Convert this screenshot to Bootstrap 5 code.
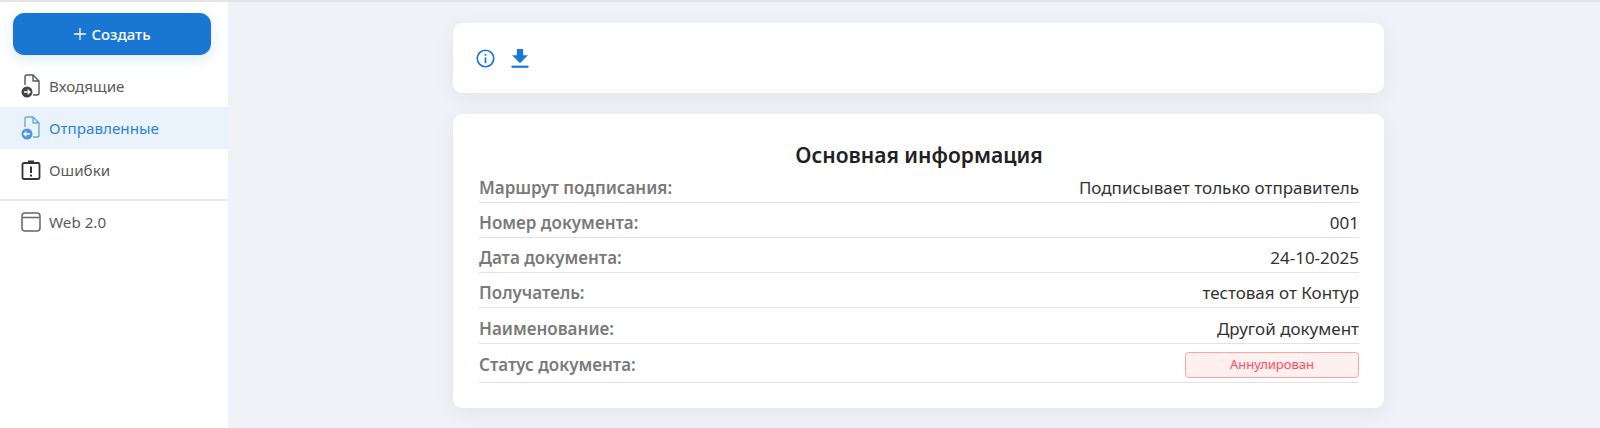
<!DOCTYPE html>
<html lang="ru">

<head>
    <meta charset="UTF-8">
    <meta name="viewport" content="width=device-width, initial-scale=1.0">
    <title>Документ</title>
    <link href="https://cdn.jsdelivr.net/npm/bootstrap@5.3.0/dist/css/bootstrap.min.css" rel="stylesheet">
    <style>
        body {
            font-family: "Noto Sans", sans-serif;
            background-color: #f1f2f7;
            height: 428px;
            overflow: hidden;
            border-top: 2px solid #e4e4e6;
        }

        .side-panel {
            width: 228px;
            height: 426px;
            background-color: #fff;
            padding-top: 11px;
        }

        .create-btn {
            display: block;
            width: 198px;
            height: 42px;
            margin: 0 0 10px 13px;
            font-size: 15px;
            font-weight: 500;
            background-color: #1976d2;
            border-color: #1976d2;
            border-radius: 11px;
            box-shadow: 0 4px 14px rgba(25, 118, 210, .16);
        }

        .side-item {
            height: 42px;
            padding-left: 21px;
            gap: 8px;
            font-size: 15.2px;
            color: #5b5b5b;
        }

        .side-item span {
            padding-top: 1px;
        }

        .side-item.is-active {
            background-color: #eaf2fb;
            color: #2d83d8;
        }

        .side-line {
            margin: 8px 0 0;
            border-top: 2px solid #e9e9e9;
            opacity: 1;
        }

        .main-area {
            width: 931px;
            margin-left: 225px;
            padding-top: 21px;
        }

        .info-panel {
            border: 0;
            border-radius: 9px;
            box-shadow: 0 6px 20px rgba(60, 64, 90, .07);
        }

        .tool-panel {
            height: 70px;
            padding-left: 23px;
            gap: 16px;
            margin-bottom: 21px;
        }

        .data-panel {
            height: 294px;
            padding: 25px 25px 0 26px;
        }

        .panel-title {
            font-size: 21px;
            font-weight: 600;
            line-height: 32px;
            color: #212121;
            margin: 0;
        }

        .data-row {
            height: 35px;
            padding-top: 5px;
            border-bottom: 1px solid #e2e2e2;
            font-size: 17px;
            color: #333;
        }

        .data-row:first-of-type {
            height: 32px;
            padding-top: 3px;
        }

        .data-row:nth-of-type(5) {
            height: 36px;
            padding-top: 6px;
        }

        .data-row:last-of-type {
            height: 39px;
            padding-top: 3px;
        }

        .data-label {
            font-weight: 600;
            color: #7a7a7a;
        }

        .status-tag {
            width: 174px;
            height: 26px;
            border: 1px solid #ffa3a3;
            border-radius: 4px;
            background-color: #fff0f0;
            color: #ff4d5e;
            font-size: 13px;
        }
    </style>
</head>

<body>
    <div class="d-flex">
        <!-- Боковое меню -->
        <div class="side-panel flex-shrink-0">
            <button class="btn btn-primary create-btn d-flex align-items-center justify-content-center gap-1">
                <svg width="14" height="14" viewBox="0 0 14 14"><path d="M7 1v12M1 7h12" stroke="#fff" stroke-width="1.3" fill="none"/></svg>
                Создать
            </button>
            <div class="side-item d-flex align-items-center">
                <svg width="20" height="26" viewBox="0 0 20 26" fill="none">
                    <path d="M4 12V4a2 2 0 0 1 2-2h6l6 6v12a2 2 0 0 1-2 2h-4M12 2v6h6" stroke="#555" stroke-width="1.4" stroke-linejoin="round"/>
                    <circle cx="6" cy="19" r="5.5" fill="#444"/>
                    <path d="M3 19h5.5M6.5 16.6 9 19l-2.500 2.400" stroke="#fff" stroke-width="1.3" fill="none"/>
                </svg>
                <span>Входящие</span>
            </div>
            <div class="side-item is-active d-flex align-items-center">
                <svg width="20" height="26" viewBox="0 0 20 26" fill="none">
                    <path d="M4 12V4a2 2 0 0 1 2-2h6l6 6v12a2 2 0 0 1-2 2h-4M12 2v6h6" stroke="#6aa8e8" stroke-width="1.4" stroke-linejoin="round"/>
                    <circle cx="6" cy="19" r="5.500" fill="#4d96e2"/>
                    <path d="M9 19H3.500M5.500 16.600 3 19l2.500 2.400" stroke="#fff" stroke-width="1.3" fill="none"/>
                </svg>
                <span>Отправленные</span>
            </div>
            <div class="side-item d-flex align-items-center">
                <svg width="20" height="22" viewBox="0 0 20 22" fill="none">
                    <rect x="1.500" y="4" width="17" height="16" rx="1.500" stroke="#333" stroke-width="1.800"/>
                    <path d="M7 4h6V1.500H7z" fill="#333"/>
                    <path d="M10 7.500v6.500M10 15.500v2" stroke="#333" stroke-width="2"/>
                </svg>
                <span>Ошибки</span>
            </div>
            <hr class="side-line">
            <div class="side-item d-flex align-items-center">
                <svg width="20" height="20" viewBox="0 0 20 20" fill="none">
                    <rect x="1" y="1" width="18" height="18" rx="3" stroke="#666" stroke-width="1.500"/>
                    <path d="M1.500 5.500h17" stroke="#666" stroke-width="1.500"/>
                </svg>
                <span>Web 2.0</span>
            </div>
        </div>

        <!-- Основная часть -->
        <div class="main-area">
            <div class="card info-panel tool-panel flex-row align-items-center">
                <svg width="19" height="19" viewBox="0 0 18 18" fill="none">
                    <circle cx="9" cy="9" r="7.800" stroke="#1976d2" stroke-width="1.600"/>
                    <path d="M9 8v5.500M9 4.800v1.600" stroke="#1976d2" stroke-width="1.600"/>
                </svg>
                <svg width="18" height="19" viewBox="0 0 17 18">
                    <path d="M5.500 0h6v6h4.500l-7.500 7.500L1 6h4.500z" fill="#1976d2"/>
                    <rect x="0.500" y="15.800" width="16" height="2" fill="#1976d2"/>
                </svg>
            </div>
            <div class="card info-panel data-panel">
                <h5 class="panel-title text-center">Основная информация</h5>
                <div class="data-row d-flex justify-content-between align-items-center">
                    <span class="data-label">Маршрут подписания:</span><span>Подписывает только отправитель</span>
                </div>
                <div class="data-row d-flex justify-content-between align-items-center">
                    <span class="data-label">Номер документа:</span><span>001</span>
                </div>
                <div class="data-row d-flex justify-content-between align-items-center">
                    <span class="data-label">Дата документа:</span><span>24-10-2025</span>
                </div>
                <div class="data-row d-flex justify-content-between align-items-center">
                    <span class="data-label">Получатель:</span><span>тестовая от Контур</span>
                </div>
                <div class="data-row d-flex justify-content-between align-items-center">
                    <span class="data-label">Наименование:</span><span>Другой документ</span>
                </div>
                <div class="data-row d-flex justify-content-between align-items-center">
                    <span class="data-label">Статус документа:</span>
                    <span class="status-tag d-flex align-items-center justify-content-center">Аннулирован</span>
                </div>
            </div>
        </div>
    </div>

    <script src="https://cdn.jsdelivr.net/npm/bootstrap@5.3.0/dist/js/bootstrap.bundle.min.js"></script>
</body>

</html>
